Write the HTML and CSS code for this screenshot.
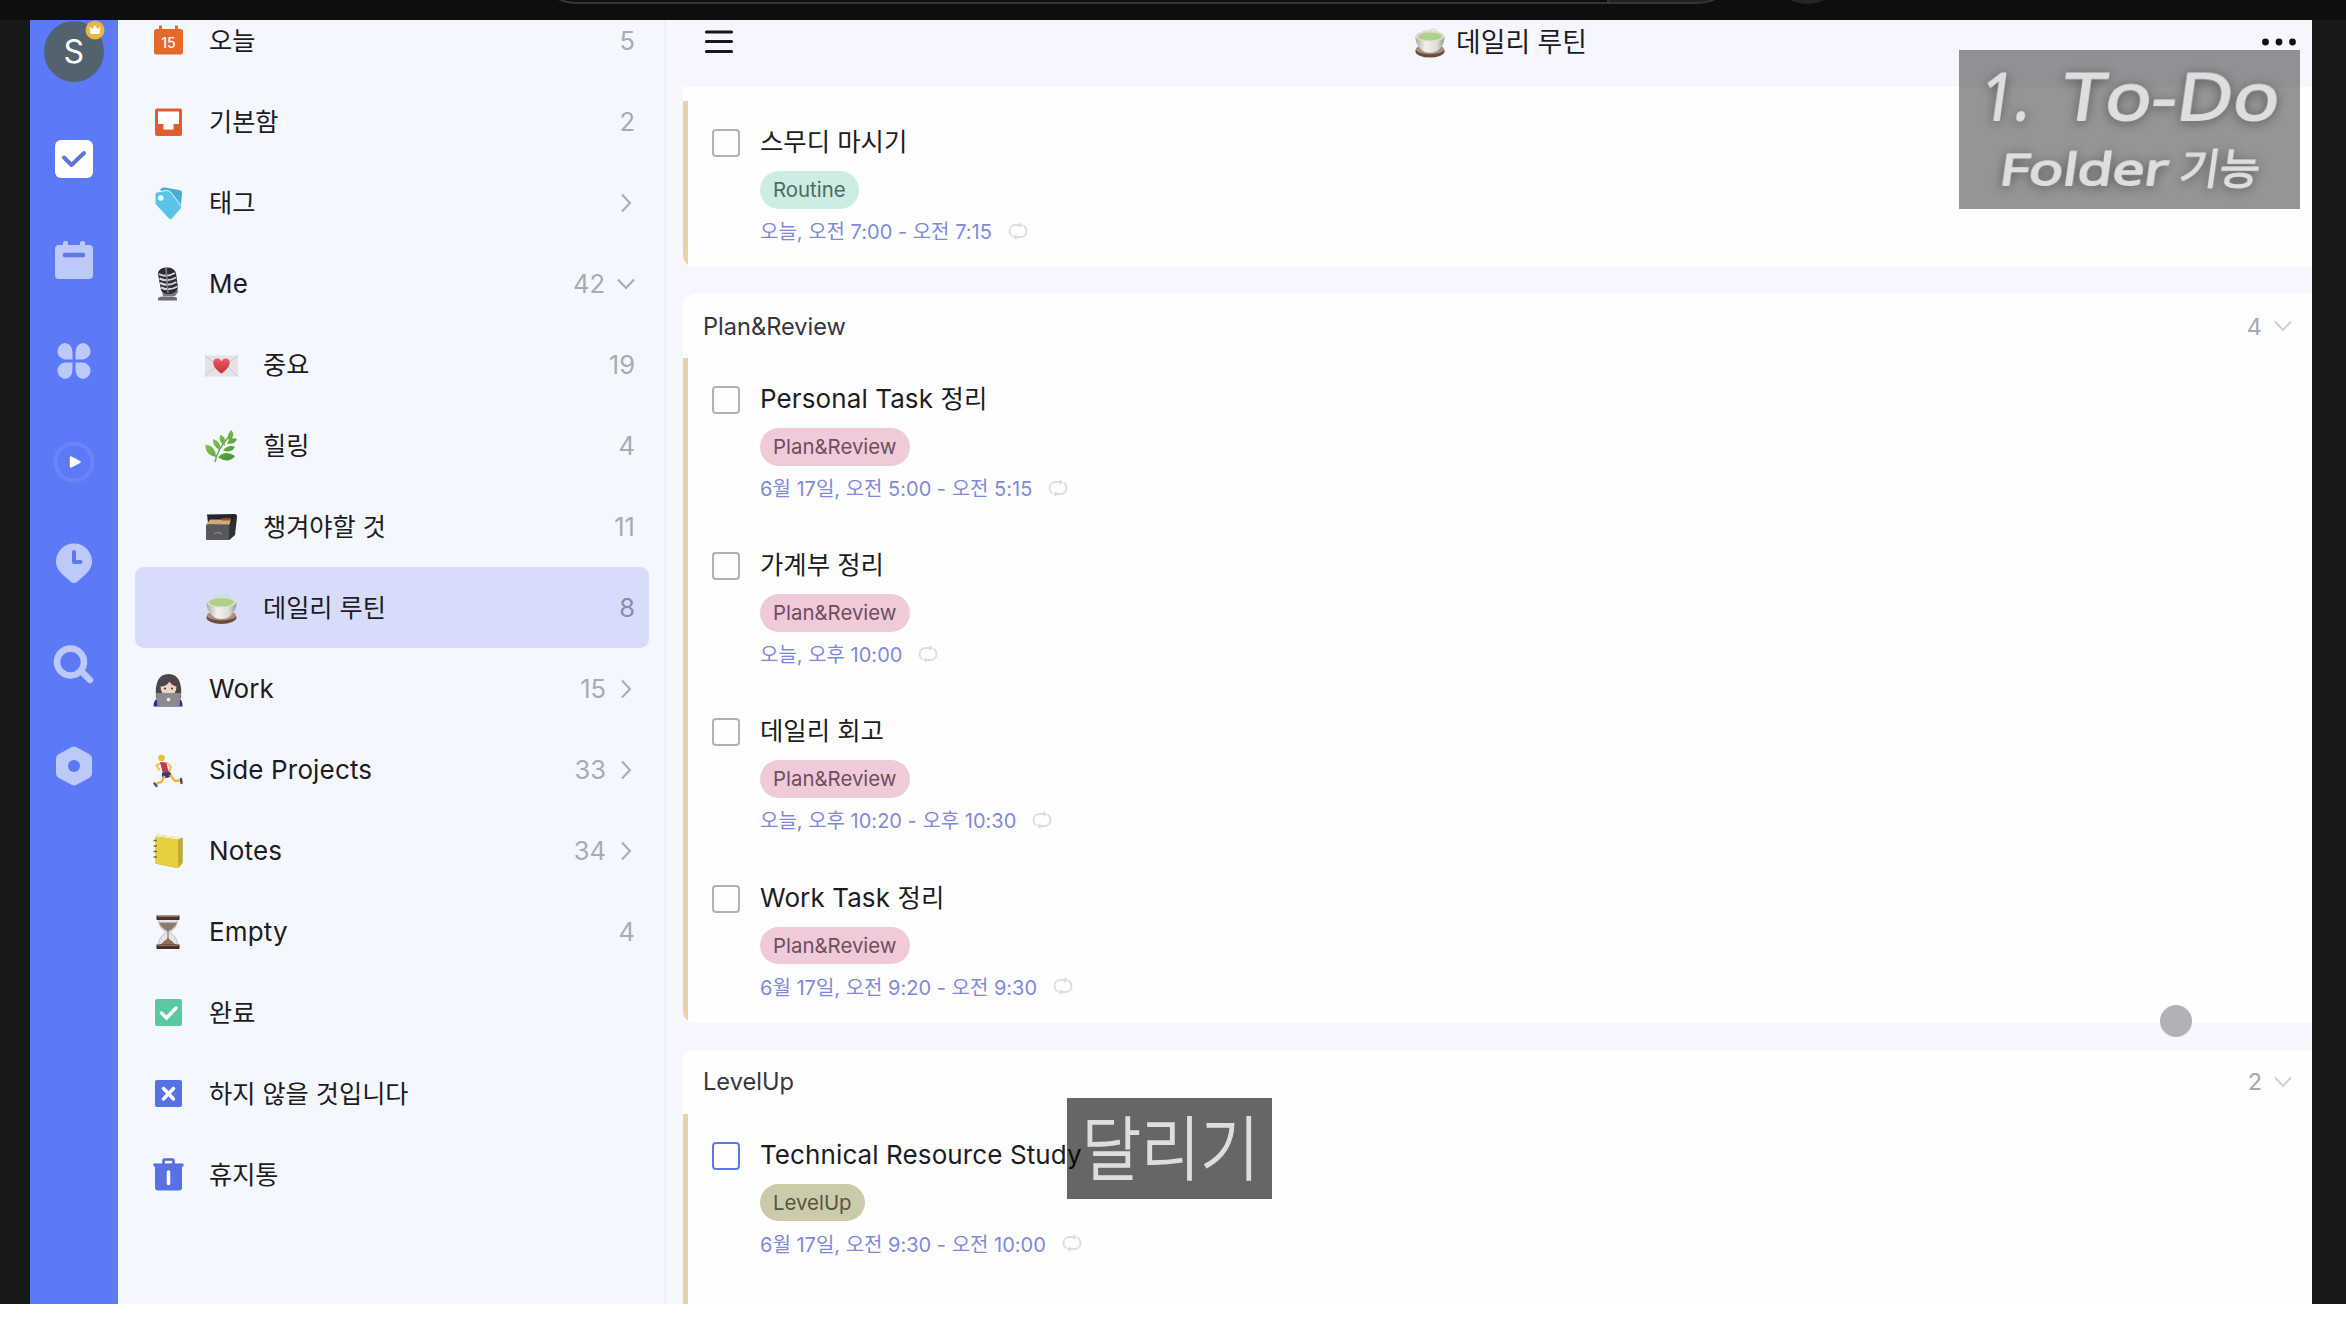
FILE: index.html
```html
<!DOCTYPE html>
<html lang="ko">
<head>
<meta charset="utf-8">
<title>데일리 루틴</title>
<link rel="stylesheet" href="styles.css">
</head>
<body>
<svg class="defs" width="0" height="0" aria-hidden="true">
  <defs>
    <linearGradient id="cup" x1="0" y1="0" x2="1" y2="0"><stop offset="0" stop-color="#aaa8a2"/><stop offset=".35" stop-color="#f3f2ee"/><stop offset=".75" stop-color="#dddbd5"/><stop offset="1" stop-color="#96948e"/></linearGradient>
    <linearGradient id="leafg" x1="0" y1="0" x2="1" y2="1"><stop offset="0" stop-color="#9bd161"/><stop offset="1" stop-color="#3d8f2b"/></linearGradient>
    <linearGradient id="heartg" x1="0" y1="0" x2="0" y2="1"><stop offset="0" stop-color="#ee5c62"/><stop offset="1" stop-color="#c92c38"/></linearGradient>
    <symbol id="tea" viewBox="0 0 36 36">
      <ellipse cx="18.500" cy="27.500" rx="15" ry="6.500" fill="#6e4b3d"/>
      <ellipse cx="18.500" cy="25.500" rx="14.500" ry="5" fill="#a98d7e"/>
      <path d="M3.500 12c0 7 3 11 6 14q3 3 9 3t9-3c3-3 6-7 6-14z" fill="url(#cup)"/>
      <ellipse cx="18.500" cy="12" rx="15" ry="5.500" fill="#dcdfd0"/>
      <ellipse cx="18.500" cy="12.300" rx="12.500" ry="4" fill="#b0d08e"/>
      <path d="M11 8c3-3 5 1 8-2s6 0 7 2" fill="none" stroke="#cfe0ba" stroke-width="2" opacity=".7"/>
    </symbol>
    <symbol id="repeat" viewBox="0 0 20 18">
      <path d="M4.500 14.500A7 7 0 0 1 1.500 9c0-3.500 2.500-6 6-6H13M15.500 3.500A7 7 0 0 1 18.500 9c0 3.500-2.500 6-6 6H7" fill="none" stroke="currentColor" stroke-width="1.800"/>
      <path d="M11.500 0l3.700 3-3.700 3zM8.500 12l-3.700 3 3.700 3z" fill="currentColor"/>
    </symbol>
    <symbol id="right" viewBox="0 0 16 24"><path d="M4 3.500l8 8.500-8 8.500" fill="none" stroke="currentColor" stroke-width="2"/></symbol>
    <symbol id="down" viewBox="0 0 18 12"><path d="M1 1.500l8 8.500 8-8.500" fill="none" stroke="currentColor" stroke-width="2"/></symbol>
  </defs>
</svg>

<div class="browser">
  <svg width="1400" height="20" viewBox="0 0 1400 20">
    <path d="M1053-2h105q-8 4-18 4h-87z" fill="#222"/>
    <path d="M0-3q9 6 22 6h1118q14 0 24-6M1053-1v4" fill="none" stroke="#353535" stroke-width="2"/>
    <circle cx="1252" cy="-36" r="40" fill="#262626"/>
  </svg>
</div>

<div class="stage">
  <nav class="rail">
    <div class="avatar">S
      <svg class="crown" width="20" height="20" viewBox="0 0 20 20"><circle cx="10" cy="10" r="9.500" fill="#e6b63f"/><path d="M4.500 6.500l3 2.500L10 5l2.500 4 3-2.500-1 7.500h-9z" fill="#fff"/></svg>
    </div>
    <a class="slot"><svg width="42" height="42" viewBox="0 0 42 42"><rect x="2" y="2" width="38" height="38" rx="6" fill="#fff"/><path d="M11 19.500l7.500 7.500L31 15" fill="none" stroke="#5f74d8" stroke-width="4" stroke-linecap="round" stroke-linejoin="round"/></svg></a>
    <a class="slot"><svg width="42" height="42" viewBox="0 0 42 42"><path d="M10 6V3.500q0-1.500 2.500-1.500T15 3.500V6h12V3.500Q27 2 29.500 2T32 3.500V6h4q4 0 4 4v26q0 4-4 4H6q-4 0-4-4V10q0-4 4-4z" fill="#bdc8fb"/><path d="M12 16h18" stroke="#6078e6" stroke-width="4.500" stroke-linecap="round"/></svg></a>
    <a class="slot"><svg width="42" height="42" viewBox="0 0 42 42" fill="#bdc8fb"><path d="M19.500 19.500H12A8.500 8.300 0 0 1 12 3q7.500 1 7.500 10zM22.500 19.500H30A8.500 8.300 0 0 0 30 3q-7.500 1-7.500 10zM19.500 22.500H12a8.500 8.300 0 0 0 0 16.500q7.500-1 7.500-10zM22.500 22.500H30a8.500 8.300 0 0 1 0 16.500q-7.500-1-7.500-10z"/></svg></a>
    <a class="slot"><svg width="42" height="42" viewBox="0 0 42 42"><circle cx="21" cy="21" r="18.500" fill="none" stroke="#6a84f9" stroke-width="4"/><path d="M18 16.500l8.500 4.500-8.500 4.500z" fill="#fff" stroke="#fff" stroke-width="2.500" stroke-linejoin="round"/></svg></a>
    <a class="slot"><svg width="42" height="42" viewBox="0 0 42 42"><path d="M21 1.500a18 18 0 0 1 18 18c0 7-5 12-10 16l-5 4.500q-3 2-6 0l-5-4.500C8 31.500 3 26.500 3 19.500a18 18 0 0 1 18-18z" fill="#bdc8fb"/><path d="M21 10v10h6.500" fill="none" stroke="#5f78e8" stroke-width="4" stroke-linecap="round" stroke-linejoin="round"/></svg></a>
    <a class="slot"><svg width="42" height="42" viewBox="0 0 42 42" fill="none" stroke="#bdc8fb"><circle cx="17.500" cy="18" r="13.500" stroke-width="6.500"/><path d="M28 27l9 9" stroke-width="6.500" stroke-linecap="round"/></svg></a>
    <a class="slot"><svg width="42" height="42" viewBox="0 0 42 42"><path d="M18.500 2.200q2.500-1.400 5 0L36 9q3 1.700 3 5v14q0 3.300-3 5l-12.500 6.800q-2.500 1.400-5 0L6 33q-3-1.700-3-5V14q0-3.300 3-5z" fill="#bdc8fb"/><circle cx="21" cy="21" r="6" fill="#5a76f2"/></svg></a>
  </nav>

  <aside class="side">
    <div class="rows">
      <div class="row"><svg class="ico" viewBox="0 0 36 36"><path d="M9 2.500h3V6h13V2.500h3V6h2.500Q33 6 33 8.500v20.500q0 2.500-2.500 2.500h-24Q4 31.500 4 29V8.500Q4 6 6.500 6H9z" fill="#e56a2a"/><text x="18.500" y="24.500" text-anchor="middle" font-family="Inter" font-size="14" font-weight="500" fill="#fff">15</text></svg><span class="ko">오늘</span><b>5</b></div>
      <div class="row"><svg class="ico" viewBox="0 0 36 36"><rect x="5" y="4.500" width="27" height="27.500" rx="2" fill="#de5f2d"/><path d="M8 7.500h21v12.500h-5.500v5.500h-10V20H8z" fill="#fff"/></svg><span class="ko">기본함</span><b>2</b></div>
      <div class="row"><svg class="ico" viewBox="0 0 36 36"><path d="M10 4.500Q12 2 15 2.500L29 5q3 .5 3 3l-1 12-4 4z" fill="#46aecf"/><path d="M7 7l10-1.500q2 0 3.500 1.500L31 20.500q1 1.500 0 3L22 34q-1.500 1.500-3 0L6 20q-1-1-1-3V9q0-2 2-2z" fill="#59c3e8" stroke="#e9f9ff" stroke-width="1"/><circle cx="10.800" cy="13" r="2.700" fill="#fff"/></svg><span class="ko">태그</span><svg class="cr" viewBox="0 0 16 24"><use href="#right"/></svg></div>
      <div class="row"><svg class="ico" viewBox="0 0 36 36"><path d="M9 12l4 18h12l3-4-2-10" fill="#777681"/><path d="M8 8q0-6 8-6.500T26 7l2 15q-3 6-9 6t-8-4z" fill="#2d2c34"/><path d="M9 8q7 4 16-1M9.500 12.500q8 4 16.500-1M10 17q8 4 16.500-1M11 21.500q8 4 16.500-1" fill="none" stroke="#d7d6dd" stroke-width="2"/><path d="M16 2l2 25" stroke="#85848e" stroke-width="1.500"/><path d="M8 34.500v-2q0-1.500 5-2h9q5 .5 5 2v2z" fill="#6c6b75"/></svg><span>Me</span><b>42</b><svg class="cd" viewBox="0 0 18 12"><use href="#down"/></svg></div>
      <div class="row sub"><svg class="ico" viewBox="0 0 36 36"><rect x="2" y="8.500" width="33" height="21" fill="#e4e3e7"/><path d="M2 8.500l16.500 13L35 8.500M2 29.500l12-12m9 0l12 12" fill="none" stroke="#c6c4ca" stroke-width="1"/><path d="M18.500 26.500c-11-7-9-14.500-5-15q3.500-.5 5 3 1.500-3.500 5-3c4 .5 6 8-5 15z" fill="url(#heartg)"/></svg><span class="ko">중요</span><b>19</b></div>
      <div class="row sub"><svg class="ico" viewBox="0 0 36 36"><path d="M12 34q2-12 15-27" fill="none" stroke="#79a660" stroke-width="1.600"/><g fill="url(#leafg)"><path d="M26 13q-3-7 2.500-11 4.500 6-2.500 11zM21.500 18q-7-5-4-11.500 7 4 4 11.500zM17 22q-8-4-7-11 9 3 7 11zM13 29Q2 27 2.500 16.500 13 18 13 29zM24 15.500q3-7 10-4.500-2 6-10 4.500zM20 22.500q4-6 12-4-3 7-12 4zM15 29.500q7-8 17-1.500-6 8-17 1.500z"/></g></svg><span class="ko">힐링</span><b>4</b></div>
      <div class="row sub"><svg class="ico" viewBox="0 0 36 36"><path d="M4 5.500L32 5q2 0 2 3l-2 18-6 5H7z" fill="#252629"/><path d="M7 10h18l5-3 1 8H4z" fill="#1b1c1e"/><path d="M3.500 15.500L7 10.500h21L26.500 16z" fill="#ccad78"/><path d="M19 9h9v2.500h-9z" fill="#a34632"/><path d="M3 15.500h23.500V31H4q-1 0-1-1z" fill="#56585c"/><path d="M26.500 15.500L32 9v16l-5.500 6z" fill="#303235"/><path d="M11 25q4-3 8 0" fill="none" stroke="#85878b" stroke-width="1.500"/></svg><span class="ko">챙겨야할 것</span><b>11</b></div>
      <div class="row sub on"><svg class="ico" viewBox="0 0 36 36"><use href="#tea"/></svg><span class="ko">데일리 루틴</span><b>8</b></div>
      <div class="row"><svg class="ico" viewBox="0 0 36 36"><path d="M6 27Q4 3 18.500 3T31 27z" fill="#4b464a"/><path d="M3.500 35.500q0-6 4-8h22q3 2 3 8z" fill="#2c2c9a"/><path d="M10.500 15.500q6 0 9-5 2 4 7 5 0 9-8 9t-8-9z" fill="#f0d2bd"/><circle cx="15" cy="17.500" r="1" fill="#333"/><circle cx="22" cy="17.500" r="1" fill="#333"/><path d="M6 22h25l-1.500 13.500h-22z" fill="#8c8c90"/><circle cx="18.500" cy="28.500" r="1.700" fill="#f4f4f6"/></svg><span>Work</span><b>15</b><svg class="cr" viewBox="0 0 16 24"><use href="#right"/></svg></div>
      <div class="row"><svg class="ico" viewBox="0 0 36 36"><circle cx="11.500" cy="6" r="3.300" fill="#f3bd30"/><path d="M10 11.500l-3.500 2 2.500 4M17 11l4 3.500-1.500 5" fill="none" stroke="#f3c64f" stroke-width="2.200" stroke-linecap="round"/><path d="M10 10l6 .5 3 10-6 1.500z" fill="#c6354c"/><path d="M12 21l8-1 2 4-5 2-5-1z" fill="#313a83"/><path d="M14.500 24l-3 6-5 1.500M20 23l5 6 5.500-.5" fill="none" stroke="#f0b73a" stroke-width="2.500"/><path d="M4.500 31.500l2 2.500M31 27l.5 4" stroke="#55505a" stroke-width="2.500" stroke-linecap="round"/></svg><span>Side Projects</span><b>33</b><svg class="cr" viewBox="0 0 16 24"><use href="#right"/></svg></div>
      <div class="row"><svg class="ico" viewBox="0 0 36 36"><path d="M7 1.500L32.500 5v24.500L27 35 5 30.500z" fill="#b59c26"/><path d="M7 1.500L32 4.500 29 7 5 3.500z" fill="#f2eec9"/><path d="M5 3.500l23.500 3V35L5 30.500z" fill="#e8cf3f"/><path d="M28.500 6.500L32.500 4.500V30l-4 5z" fill="#bfa935"/><path d="M3.500 7.500H7M3.500 13H7M3.500 18.500H7M3.500 24H7" stroke="#7d6d35" stroke-width="1.600"/></svg><span>Notes</span><b>34</b><svg class="cr" viewBox="0 0 16 24"><use href="#right"/></svg></div>
      <div class="row"><svg class="ico" viewBox="0 0 36 36"><path d="M8.500 5q0 9 8 13-8 5-8 13h19q0-8-8-13 8-4 8-13z" fill="#e6e4e9" stroke="#b5b2b8" stroke-width=".8"/><path d="M9 8.500h18q-1.500 5-8 8.500h-2Q10.500 13.500 9 8.500z" fill="#8d7d6c"/><path d="M18 24q4 3 8 7H10q4-4 8-7z" fill="#95714e"/><path d="M18 16v10" stroke="#95714e" stroke-width="1.200"/><path d="M6.500 1.500h23V6h-23zM6.500 30.500h23V35h-23z" fill="#45302c"/><path d="M8 2.500h20M8 31.500h20" stroke="#a0705a"/></svg><span>Empty</span><b>4</b></div>
      <div class="row"><svg class="ico" viewBox="0 0 36 36"><rect x="5" y="4" width="27" height="27" rx="2" fill="#5ac8a0"/><path d="M11.500 18l5 5L26 13" fill="none" stroke="#fff" stroke-width="3.500" stroke-linecap="round"/></svg><span class="ko">완료</span></div>
      <div class="row"><svg class="ico" viewBox="0 0 36 36"><rect x="5" y="4" width="27" height="27" rx="2" fill="#5872e4"/><path d="M13.500 12.500l10 10.500m0-10.500l-10 10.500" fill="none" stroke="#fff" stroke-width="3.500" stroke-linecap="round"/></svg><span class="ko">하지 않을 것입니다</span></div>
      <div class="row"><svg class="ico" viewBox="0 0 36 36"><path d="M3.500 8h30" stroke="#5069dc" stroke-width="3"/><path d="M13.500 7.500V3.500q0-1 1-1h8q1 0 1 1v4" fill="none" stroke="#5069dc" stroke-width="2.500"/><path d="M5 8h27v22.500q0 3-3 3H8q-3 0-3-3z" fill="#5872e4"/><path d="M18.500 15v11.500" stroke="#fff" stroke-width="3.500" stroke-linecap="round"/></svg><span class="ko">휴지통</span></div>
    </div>
  </aside>

  <main class="main">
    <header class="head">
      <svg width="30" height="26" viewBox="0 0 30 26"><path d="M2.500 3h25M2.500 12.500h25M2.500 22.500h25" stroke="#17171c" stroke-width="3.200" stroke-linecap="round"/></svg>
      <h1><svg width="35" height="36" viewBox="0 0 36 36"><use href="#tea"/></svg><span>데일리 루틴</span></h1>
      <svg width="36" height="10" viewBox="0 0 36 10" fill="#111"><circle cx="4.500" cy="5" r="3.400"/><circle cx="18" cy="5" r="3.400"/><circle cx="31.500" cy="5" r="3.400"/></svg>
    </header>

    <section class="card first">
      <ul class="tasks">
        <li><i class="box"></i><div class="body"><h3 class="ko">스무디 마시기</h3><em class="tag green">Routine</em><p><span>오늘, 오전 7:00 - 오전 7:15</span><svg class="rep"><use href="#repeat"/></svg></p></div></li>
      </ul>
    </section>

    <section class="card">
      <div class="group"><h2>Plan&amp;Review</h2><b>4</b><svg class="cd" viewBox="0 0 18 12"><use href="#down"/></svg></div>
      <ul class="tasks">
        <li><i class="box"></i><div class="body"><h3>Personal Task <span class="ko">정리</span></h3><em class="tag pink">Plan&amp;Review</em><p><span>6월 17일, 오전 5:00 - 오전 5:15</span><svg class="rep"><use href="#repeat"/></svg></p></div></li>
        <li><i class="box"></i><div class="body"><h3 class="ko">가계부 정리</h3><em class="tag pink">Plan&amp;Review</em><p><span>오늘, 오후 10:00</span><svg class="rep"><use href="#repeat"/></svg></p></div></li>
        <li><i class="box"></i><div class="body"><h3 class="ko">데일리 회고</h3><em class="tag pink">Plan&amp;Review</em><p><span>오늘, 오후 10:20 - 오후 10:30</span><svg class="rep"><use href="#repeat"/></svg></p></div></li>
        <li><i class="box"></i><div class="body"><h3>Work Task <span class="ko">정리</span></h3><em class="tag pink">Plan&amp;Review</em><p><span>6월 17일, 오전 9:20 - 오전 9:30</span><svg class="rep"><use href="#repeat"/></svg></p></div></li>
      </ul>
    </section>

    <section class="card last">
      <div class="group"><h2>LevelUp</h2><b>2</b><svg class="cd" viewBox="0 0 18 12"><use href="#down"/></svg></div>
      <ul class="tasks">
        <li><i class="box blue"></i><div class="body"><h3>Technical Resource Study</h3><em class="tag olive">LevelUp</em><p><span>6월 17일, 오전 9:30 - 오전 10:00</span><svg class="rep"><use href="#repeat"/></svg></p></div></li>
      </ul>
    </section>
  </main>
</div>

<div class="touch"></div>
<div class="caption">
  <svg width="341" height="159" viewBox="0 0 341 159">
    <text transform="translate(19 70) skewX(-8)" textLength="50" lengthAdjust="spacingAndGlyphs" class="line1">1.</text>
    <text transform="translate(101 70) skewX(-8)" textLength="217" lengthAdjust="spacingAndGlyphs" class="line1">To-Do</text>
    <text transform="translate(39 135) skewX(-8)" textLength="168" lengthAdjust="spacingAndGlyphs" class="line2">Folder</text>
    <text transform="translate(219 134) skewX(-8)" textLength="80" lengthAdjust="spacingAndGlyphs" class="line2 kr">기능</text>
  </svg>
</div>
<div class="subtitle"><span>달리기</span></div>
</body>
</html>
```
FILE: styles.css
```css
* { box-sizing: border-box; }
html, body { margin: 0; height: 1330px; overflow: hidden; background: #fff; }
body { position: relative; font-family: Inter, "Noto Sans CJK KR", sans-serif; color: #1c1c22; }
h1, h2, h3, p, ul { margin: 0; padding: 0; font-weight: 400; list-style: none; }
svg { display: block; flex: none; }
.defs { position: absolute; }

.browser { height: 20px; background: #0e0e0e; padding-left: 555px; overflow: hidden; }
.stage { display: flex; height: 1284px; padding: 0 34px 0 30px; background: #191919; overflow: hidden; }

.rail { width: 87.500px; flex: none; background: #5c79f6; display: flex; flex-direction: column; align-items: center; }
.avatar { position: relative; width: 60px; height: 61px; margin: 1px 0 26px; border-radius: 50%; background: #52636f; color: #fff; font-size: 32px; line-height: 61px; text-align: center; }
.crown { position: absolute; right: -1px; top: -1px; }
.slot { height: 101.200px; display: flex; align-items: center; justify-content: center; }

.side { width: 548.500px; flex: none; background: #f5f7ff; border-right: 2px solid #eceffa; overflow: hidden; }
.rows { margin-top: -20px; padding: 0 15px 0 17.500px; }
.row { display: flex; align-items: center; height: 81px; padding: 0 14px 0 15px; border-radius: 9px; font-size: 26px; }
.sub { padding-left: 68px; }
.on { background: #d7dcfb; }
.ico { width: 36px; height: 36px; }
.row span { margin-left: 23px; letter-spacing: .15px; }
.row.sub span { margin-left: 24px; }
.row span.ko { margin-right: auto; padding-bottom: 3px; letter-spacing: 0; }
.row b { margin-left: auto; font-weight: 400; font-size: 25.500px; color: #a9aab2; }
.row.on b { color: #888dac; }
.cr { width: 16px; height: 24px; color: #a9aab2; margin-left: 12px; margin-right: 1px; }
.row .cd { width: 18px; height: 12px; color: #a9aab2; margin-left: 12px; }
.ko { font-family: "Noto Sans CJK KR", sans-serif; font-size: 25.200px; }

.main { flex: 1; min-width: 0; background: #f5f6fe; padding-left: 17px; display: flex; flex-direction: column; }
.head { height: 67px; flex: none; display: flex; align-items: center; justify-content: space-between; padding: 0 15px 23px 21px; }
.head h1 { display: flex; align-items: center; gap: 9px; margin-left: 4px; font-family: "Noto Sans CJK KR", sans-serif; font-size: 26.800px; line-height: 36px; }
.head h1 span { padding-bottom: 2px; }
.card { background: #fefefe; border-radius: 12px 0 0 12px; margin-bottom: 27px; overflow: hidden; flex: none; }
.first { height: 180px; padding-top: 14px; border-radius: 0 0 0 12px; }
.last { flex: 1; margin: 0; border-radius: 12px 0 0 0; }
.group { display: flex; align-items: center; height: 64px; padding: 0 20px; font-size: 23.500px; }
.group h2 { flex: 1; font-size: 23.600px; color: #35353b; }
.group b { font-weight: 400; color: #a9a9ae; }
.group .cd { width: 18px; height: 12px; margin-left: 12px; color: #d0d0d6; }
.tasks { border-left: 5px solid #ecd0a6; }
.last .tasks { height: 100%; }
.tasks li { display: flex; height: 166.200px; padding: 22px 0 0 24px; }
.box { width: 28px; height: 28px; margin-top: 6px; border: 2.500px solid #b2b1b6; border-radius: 4px; flex: none; }
.box.blue { border-color: #5a79e6; }
.body { margin-left: 20px; display: flex; flex-direction: column; align-items: flex-start; }
.body h3 { font-size: 26px; line-height: 37px; height: 38px; white-space: nowrap; letter-spacing: .1px; }
.body h3.ko { font-size: 25.400px; line-height: 34px; letter-spacing: 0; }
.body h3 .ko { font-size: 25.400px; line-height: 30px; }
.tag { height: 37.500px; margin-top: 10px; padding: 0 13px; border-radius: 19px; font-style: normal; font-size: 20.400px; line-height: 38px; }
.green { background: #cdece2; color: #4c6b62; }
.pink { background: #f1cada; color: #6c4f5d; }
.olive { background: #cbcbac; color: #55553f; }
.body p { display: flex; align-items: center; gap: 16px; height: 28px; margin-top: 8px; font-size: 20px; color: #7e89dc; white-space: nowrap; }
.rep { width: 20px; height: 18px; color: #dddde1; }

.touch { position: absolute; left: 2160px; top: 1005px; width: 32px; height: 32px; border-radius: 50%; background: #b3b1b6; }
.caption { position: absolute; left: 1959px; top: 50px; width: 341px; height: 159px; background: rgba(0, 0, 0, .41); }
.caption text { fill: #dedede; stroke: #dedede; stroke-width: 2px; stroke-linejoin: round; font-family: "Open Sans", sans-serif; filter: drop-shadow(0 2px 6px rgba(0, 0, 0, .4)); }
.line1 { font-size: 66px; }
.line2 { font-size: 44px; }
.caption .kr { font-family: "Noto Sans CJK KR", sans-serif; font-size: 42px; stroke-width: 1.500px; }
.subtitle { position: absolute; left: 1067px; top: 1098px; width: 205px; height: 101px; background: rgba(0, 0, 0, .6); display: flex; align-items: center; justify-content: center; }
.subtitle span { font-family: "Noto Sans CJK KR", sans-serif; font-weight: 300; font-size: 70px; line-height: 101px; color: #dedede; -webkit-text-stroke: 1.500px #dedede; transform: translate(1px, -4px) scaleX(.92); }
```
